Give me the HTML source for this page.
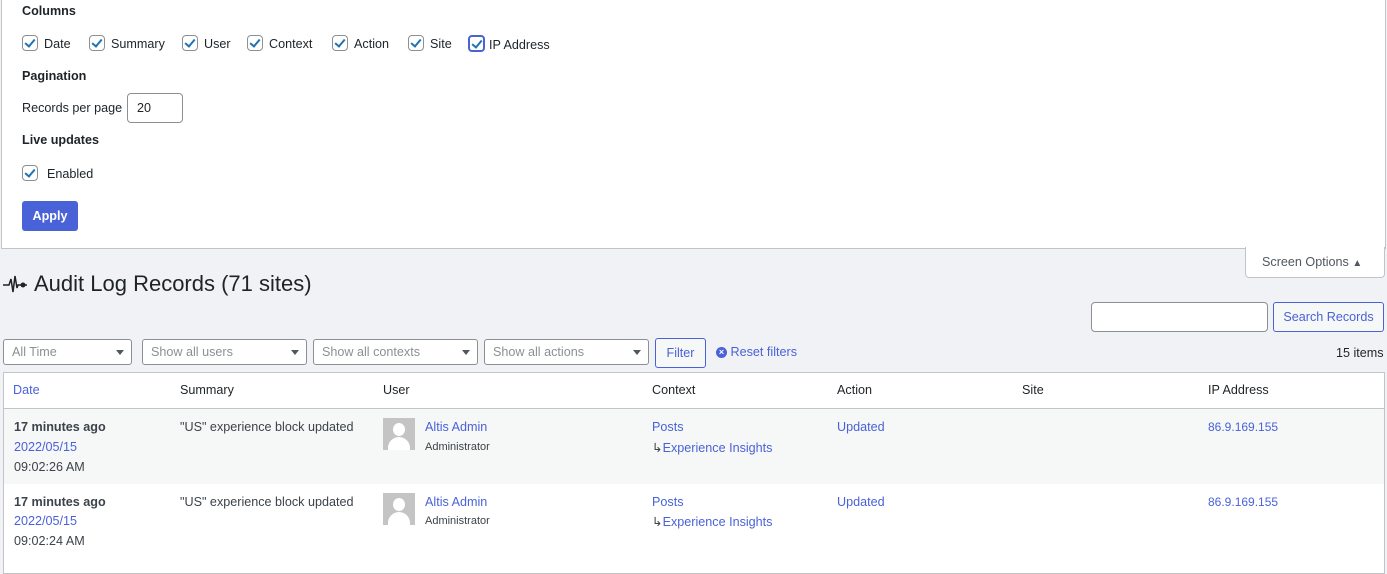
<!DOCTYPE html>
<html><head><meta charset="utf-8"><style>
body{margin:0;width:1387px;height:558px;overflow:hidden;background:#f1f2f6;font-family:"Liberation Sans",sans-serif;font-size:12.6px;color:#1d2327;position:relative}
.a{position:absolute;white-space:nowrap}
a{color:#4a62d8;text-decoration:none}
.cb{display:inline-block;width:14px;height:14px;border:1px solid #8c8f94;border-radius:4px;background:#fff;vertical-align:-3px;margin-right:6px;position:relative}
.cb:after{content:"";position:absolute;left:4px;top:1px;width:4px;height:8px;border:solid #2271b1;border-width:0 2px 2px 0;transform:rotate(40deg)}
.b{font-weight:bold}
.sel{position:absolute;top:339px;height:26px;border:1px solid #8c8f94;border-radius:3px;background:#fff;box-sizing:border-box;color:#8c8f94;padding:5px 8px}
.sel:after{content:"";position:absolute;right:7px;top:10px;border:4px solid transparent;border-top:5px solid #50575e}
.th{position:absolute;top:383px}
.av{position:absolute;width:32px;height:32px;background:#c4c4c4;overflow:hidden}
.av:before{content:"";position:absolute;left:10px;top:5px;width:12px;height:13px;border-radius:50%;background:#fff}
.av:after{content:"";position:absolute;left:5px;top:19px;width:22px;height:18px;border-radius:11px 11px 0 0;background:#fff}
</style></head><body>
<div class="a" style="left:1px;top:-1px;width:1383px;height:249px;background:#fff;border:1px solid #c3c4c7;border-top:none"></div>
<div class="a" style="left:1245px;top:247px;width:138px;height:30px;background:#fff;border:1px solid #c3c4c7;border-top:none;border-radius:0 0 4px 4px"></div>
<div class="a" style="left:1262px;top:255px;color:#50575e">Screen Options <span style="font-size:10px">▲</span></div>
<div class="a b" style="left:22px;top:4px">Columns</div>
<div class="a" style="left:22px;top:35px"><span class="cb"></span>Date</div>
<div class="a" style="left:89px;top:35px"><span class="cb"></span>Summary</div>
<div class="a" style="left:182px;top:35px"><span class="cb"></span>User</div>
<div class="a" style="left:247px;top:35px"><span class="cb"></span>Context</div>
<div class="a" style="left:332px;top:35px"><span class="cb"></span>Action</div>
<div class="a" style="left:408px;top:35px"><span class="cb"></span>Site</div>
<div class="a" style="left:468px;top:35px"><span class="cb" style="border:2px solid #4a62d8;width:13px;height:13px;margin-right:4px"></span>IP Address</div>
<div class="a b" style="left:22px;top:69px">Pagination</div>
<div class="a" style="left:22px;top:101px">Records per page</div>
<div class="a" style="left:127px;top:93px;width:56px;height:30px;border:1px solid #8c8f94;border-radius:4px;box-sizing:border-box;padding:7px 9px;background:#fff">20</div>
<div class="a b" style="left:22px;top:133px">Live updates</div>
<div class="a" style="left:22px;top:165px"><span class="cb" style="margin-right:9px"></span>Enabled</div>
<div class="a b" style="left:22px;top:201px;width:56px;height:30px;background:#4a62d8;color:#fff;border-radius:3px;text-align:center;line-height:30px">Apply</div>
<svg class="a" style="left:3px;top:274px" width="24" height="22" viewBox="0 0 24 22"><path d="M0 11H6L8 5L10 18L12 2L14 14L15 11H24" fill="none" stroke="#1d2327" stroke-width="1.5"/><circle cx="20" cy="11" r="2.5" fill="#1d2327"/></svg>
<div class="a" style="left:34px;top:271px;font-size:22px">Audit Log Records (71 sites)</div>
<div class="a" style="left:1091px;top:302px;width:177px;height:30px;border:1px solid #8c8f94;border-radius:4px;background:#fff;box-sizing:border-box"></div>
<div class="a" style="left:1273px;top:302px;width:111px;height:30px;border:1px solid #4a62d8;border-radius:3px;background:#f6f7f7;box-sizing:border-box;color:#4a62d8;text-align:center;line-height:28px">Search Records</div>
<div class="sel" style="left:3px;width:129px">All Time</div>
<div class="sel" style="left:142px;width:165px">Show all users</div>
<div class="sel" style="left:313px;width:165px">Show all contexts</div>
<div class="sel" style="left:484px;width:165px">Show all actions</div>
<div class="a" style="left:655px;top:338px;width:51px;height:30px;border:1px solid #4a62d8;border-radius:3px;background:#f6f7f7;box-sizing:border-box;color:#4a62d8;text-align:center;line-height:28px">Filter</div>
<div class="a" style="left:716px;top:345px;color:#4a62d8"><span style="display:inline-block;width:11px;height:11px;border-radius:50%;background:#4a62d8;color:#fff;font-size:9px;line-height:11px;text-align:center;vertical-align:1px;font-weight:bold">×</span> Reset filters</div>
<div class="a" style="left:1336px;top:346px">15 items</div>
<div class="a" style="left:3px;top:372px;width:1380px;height:200px;background:#fff;border:1px solid #c3c4c7"></div>
<div class="a" style="left:4px;top:408px;width:1380px;height:1px;background:#c3c4c7"></div>
<div class="a" style="left:4px;top:409px;width:1380px;height:75px;background:#f6f7f7"></div>
<div class="th" style="left:13px"><a>Date</a></div>
<div class="th" style="left:180px">Summary</div>
<div class="th" style="left:383px">User</div>
<div class="th" style="left:652px">Context</div>
<div class="th" style="left:837px">Action</div>
<div class="th" style="left:1022px">Site</div>
<div class="th" style="left:1208px">IP Address</div>

<div class="a b" style="left:14px;top:420px;color:#3c434a">17 minutes ago</div>
<div class="a" style="left:14px;top:440px"><a>2022/05/15</a></div>
<div class="a" style="left:14px;top:460px;color:#3c434a">09:02:26 AM</div>
<div class="a" style="left:180px;top:420px;color:#3c434a">"US" experience block updated</div>
<div class="av" style="left:383px;top:418px"></div>
<div class="a" style="left:425px;top:420px"><a>Altis Admin</a></div>
<div class="a" style="left:425px;top:441px;font-size:11px;color:#3c434a">Administrator</div>
<div class="a" style="left:652px;top:420px"><a>Posts</a></div>
<div class="a" style="left:652px;top:440px;color:#4a62d8"><span style="color:#3c434a">↳</span>Experience Insights</div>
<div class="a" style="left:837px;top:420px"><a>Updated</a></div>
<div class="a" style="left:1208px;top:420px;font-size:12px"><a>86.9.169.155</a></div>

<div class="a b" style="left:14px;top:495px;color:#3c434a">17 minutes ago</div>
<div class="a" style="left:14px;top:514px"><a>2022/05/15</a></div>
<div class="a" style="left:14px;top:534px;color:#3c434a">09:02:24 AM</div>
<div class="a" style="left:180px;top:495px;color:#3c434a">"US" experience block updated</div>
<div class="av" style="left:383px;top:493px"></div>
<div class="a" style="left:425px;top:495px"><a>Altis Admin</a></div>
<div class="a" style="left:425px;top:515px;font-size:11px;color:#3c434a">Administrator</div>
<div class="a" style="left:652px;top:495px"><a>Posts</a></div>
<div class="a" style="left:652px;top:514px;color:#4a62d8"><span style="color:#3c434a">↳</span>Experience Insights</div>
<div class="a" style="left:837px;top:495px"><a>Updated</a></div>
<div class="a" style="left:1208px;top:495px;font-size:12px"><a>86.9.169.155</a></div>
</body></html>
